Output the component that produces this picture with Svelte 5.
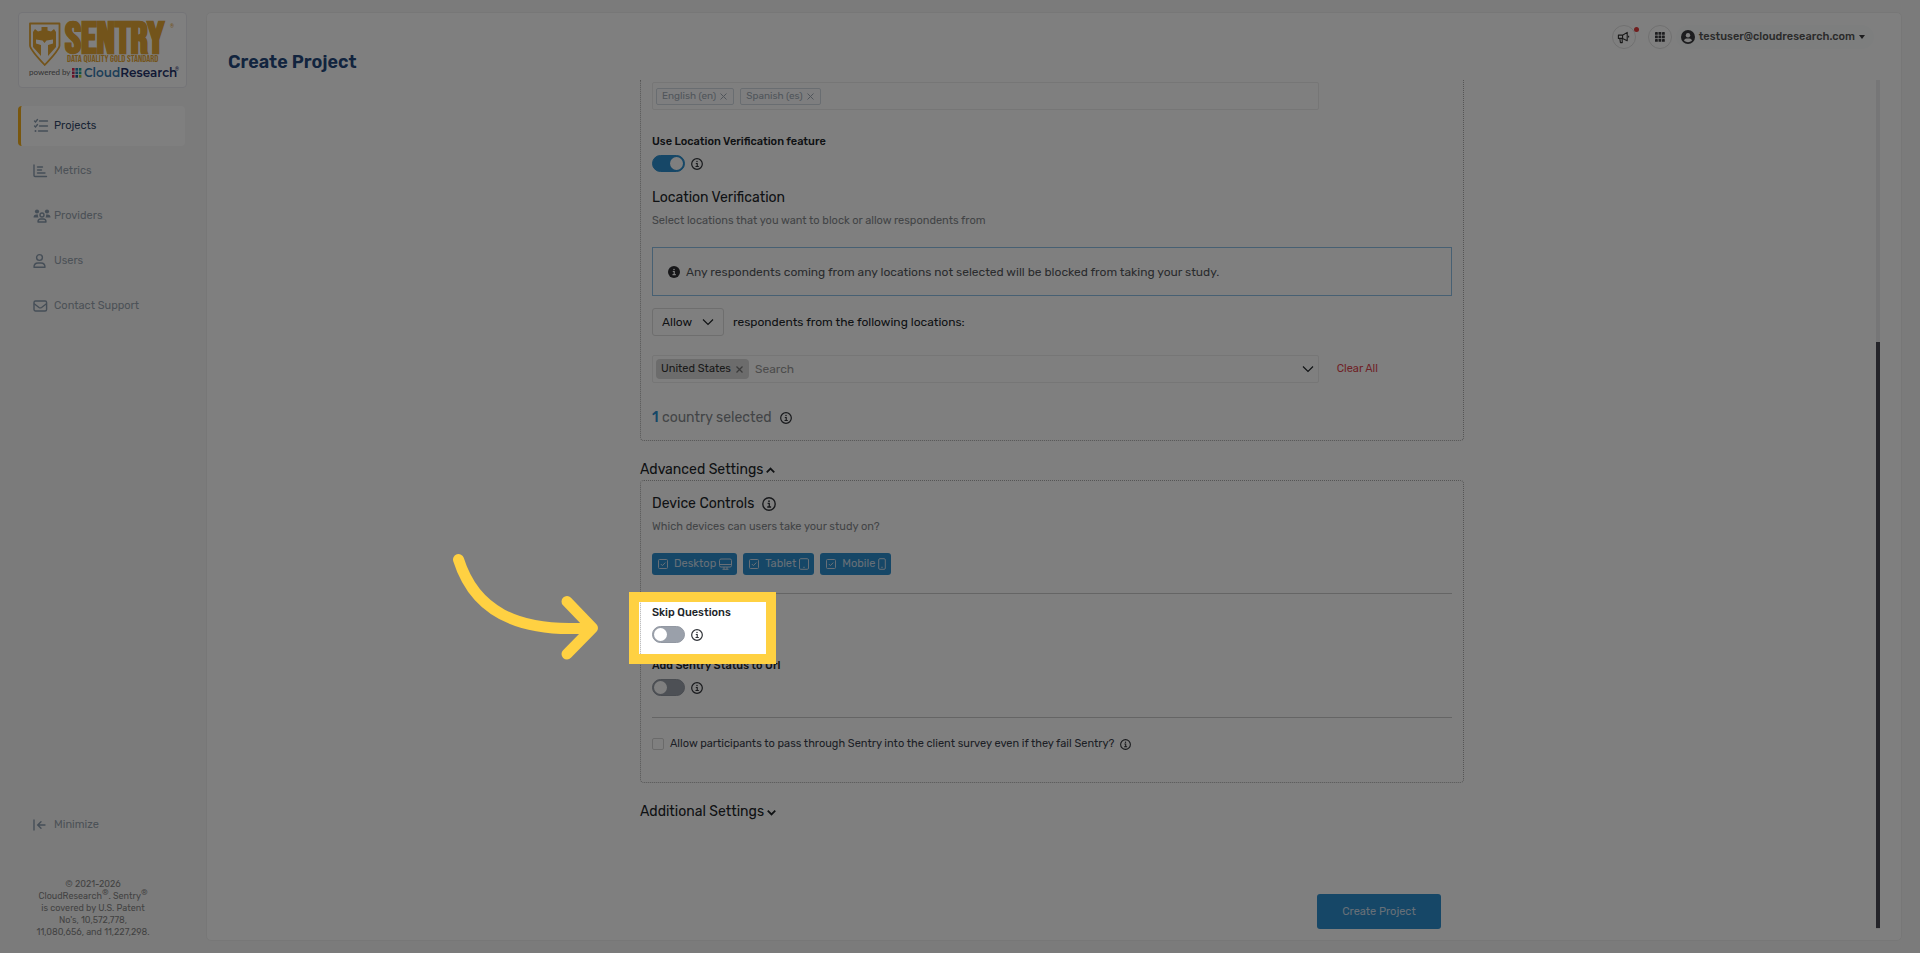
<script lang="ts">
  interface NavItem {
    label: string;
    icon: string;
    active?: boolean;
  }

  const nav: NavItem[] = [
    { label: "Projects", icon: "tasks", active: true },
    { label: "Metrics", icon: "chart" },
    { label: "Providers", icon: "group" },
    { label: "Users", icon: "user" },
    { label: "Contact Support", icon: "mail" },
  ];

  const devices = ["Desktop", "Tablet", "Mobile"];

  let languages = $state(["English (en)", "Spanish (es)"]);
  let countries = $state(["United States"]);
  let mode = $state("Allow");
  let search = $state("");
  let useLocation = $state(true);
  let skipQuestions = $state(false);
  let addStatus = $state(false);
  let passThrough = $state(false);
  let picked = $state(["Desktop", "Tablet", "Mobile"]);
</script>

{#snippet info(size: string)}
  <svg class="info {size}" viewBox="0 0 16 16" fill="none" stroke="currentColor">
    <circle cx="8" cy="8" r="7.1" stroke-width="1.6" />
    <path d="M6.4 7.3h1.9v4M6 11.4h4.4" stroke-width="1.5" />
    <circle cx="8" cy="4.8" r="1" fill="currentColor" stroke="none" />
  </svg>
{/snippet}

{#snippet chevron(cls: string)}
  <svg class="chevron {cls}" viewBox="0 0 12 12" fill="none" stroke="currentColor">
    <path d="M1 3.5l5 5 5-5" />
  </svg>
{/snippet}

{#snippet navIcon(name: string)}
  <svg class="nav-icon" viewBox="0 0 18 16" fill="none" stroke="currentColor" stroke-width="1.4" stroke-linecap="round">
    {#if name === "tasks"}
      <path d="M1.5 3l1 1 2-2.5M1.5 8l1 1 2-2.5M6.5 3h8M6.5 8h8M5.5 13h9" />
      <circle cx="2.5" cy="13" r="1" fill="currentColor" stroke="none" />
    {:else if name === "chart"}
      <path d="M1 2v10.500q0 1 1 1h11.500M4.500 4h5M4.500 7h4M4.500 10h7.500" />
    {:else if name === "group"}
      <g fill="currentColor" stroke="none">
        <circle cx="4" cy="3.5" r="2.1" />
        <circle cx="14" cy="3.5" r="2.1" />
        <path d="M.5 9.500q0-3 3-3h1.500q-.5 1.500.5 3zM17.500 9.500q0-3-3-3h-1.500q.5 1.500-.5 3z" />
      </g>
      <circle cx="9" cy="7" r="2" />
      <path d="M5 14q0-3 2.500-3h3q2.500 0 2.500 3z" stroke-linejoin="round" />
    {:else if name === "user"}
      <circle cx="6.5" cy="4.5" r="2.9" />
      <path d="M1 14.200q0-4.200 4-4.200h3q4 0 4 4.200z" stroke-linejoin="round" />
    {:else if name === "mail"}
      <rect x="1" y="3" width="12.600" height="10" rx="1.5" />
      <path d="M1.500 6l4.500 3.500q1.300.8 2.600 0l4.500-3.500" />
    {:else}
      <path d="M1 3v10M12 8H5M8 4.700L4.700 8l3.300 3.300" />
    {/if}
  </svg>
{/snippet}

<div class="app">
  <aside>
    <a class="brand" href="#home" aria-label="Sentry, powered by CloudResearch">
      <svg viewBox="0 0 167 74">
        <path
          d="M11 10.500h29.500v22q0 4-14.750 19.500q-14.750-15.500-14.750-19.500z"
          fill="none"
          stroke="#e7a836"
          stroke-width="1.8"
          stroke-linejoin="round"
        />
        <path
          fill="#e7a836"
          d="M14 19l2-3 3 2.500 3.500-1V14h6v3.500l3.500 1 3-2.500 2 3v15l-8 9V32l5-1.500v-4l-6.500 1-2 2.500-2-2.500-6.500-1v4l5 1.500v11l-8-9z"
        />
        <text class="logo-name" x="46" y="40">SENTRY</text>
        <text class="logo-tag" x="48" y="49">DATA QUALITY GOLD STANDARD</text>
        <text class="logo-reg" x="151" y="15">®</text>
        <text class="logo-by" x="10" y="62">powered by</text>
        {#each ["#e2264d", "#2b7fb8", "#19a89a", "#b02a5b", "#2b7fb8", "#19a89a", "#e2264d", "#245a92", "#a9c83a"] as fill, i}
          <rect x={53 + (i % 3) * 3.4} y={55 + Math.floor(i / 3) * 3.5} width="2.6" height="2.7" {fill} />
        {/each}
        <text class="logo-cr" x="65" y="64"><tspan fill="#3a7cb0">Cloud</tspan><tspan fill="#24336b">Research</tspan></text>
        <text class="logo-reg dark" x="156" y="58">®</text>
      </svg>
    </a>

    <nav>
      {#each nav as item}
        <a class="nav-item" class:active={item.active} href="#{item.icon}">
          {@render navIcon(item.icon)}
          {item.label}
        </a>
      {/each}
    </nav>

    <button class="nav-item minimize">
      {@render navIcon("minimize")}
      Minimize
    </button>
    <p class="legal">
      © 2021-2026<br />CloudResearch<sup>®</sup>. Sentry<sup>®</sup><br />is covered by U.S. Patent<br />No's, 10,572,778,<br />11,080,656, and 11,227,298.
    </p>
  </aside>

  <main>
    <header>
      <h1>Create Project</h1>
      <div class="actions">
        <button class="round" aria-label="Announcements">
          <svg width="13" height="13" viewBox="0 0 14 14" fill="none" stroke="#333" stroke-width="1.2" stroke-linejoin="round">
            <path d="M1.500 4.500h4.500l5-3v9l-5-2.500H1.500zM6 4.500v3.500M3 8l.7 4.500h2L5.500 8M12.500 5v2" />
          </svg>
          <span class="dot"></span>
        </button>
        <button class="round" aria-label="Apps">
          <svg width="10" height="10" viewBox="0 0 10 10" fill="#3a3a3e">
            {#each [0, 1, 2, 3, 4, 5, 6, 7, 8] as n}
              <rect x={(n % 3) * 3.5} y={Math.floor(n / 3) * 3.5} width="2.8" height="2.8" rx=".4" />
            {/each}
          </svg>
        </button>
        <button class="account">
          <svg width="14" height="14" viewBox="0 0 14 14">
            <circle cx="7" cy="7" r="7" fill="#3a3a3e" />
            <circle cx="7" cy="5.2" r="2.2" fill="#fff" />
            <path d="M3 10.800q.5-2.300 2.500-2.300h3q2 0 2.500 2.300q-4 2.800-8 0z" fill="#fff" />
          </svg>
          testuser@cloudresearch.com
          <svg width="6" height="4" viewBox="0 0 6 4"><path d="M0 0h6L3 4z" fill="#3a3a3e" /></svg>
        </button>
      </div>
    </header>

    <div class="scroller">
      <div class="column">
        <section class="card cut">
          <div class="row">
            <div class="field">
              {#each languages as lang}
                <span class="tag">
                  {lang}
                  <button aria-label="Remove {lang}" onclick={() => (languages = languages.filter((l) => l !== lang))}>
                    <svg width="7" height="7" viewBox="0 0 7 7" stroke="currentColor"><path d="M.5.5l6 6M6.500.5l-6 6" /></svg>
                  </button>
                </span>
              {/each}
            </div>
          </div>

          <div class="switch first">
            <label for="use-location">Use Location Verification feature</label>
            <div class="switch-row">
              <input id="use-location" type="checkbox" role="switch" bind:checked={useLocation} />
              {@render info("sm")}
            </div>
          </div>

          <h2 class="after-switch">Location Verification</h2>
          <p class="hint">Select locations that you want to block or allow respondents from</p>

          <div class="alert">
            <svg width="12" height="12" viewBox="0 0 16 16">
              <circle cx="8" cy="8" r="8" fill="#2f2f33" />
              <path d="M6.400 7.300h1.900v4M6 11.400h4.400" fill="none" stroke="#fff" stroke-width="1.6" />
              <circle cx="8" cy="4.7" r="1.1" fill="#fff" />
            </svg>
            Any respondents coming from any locations not selected will be blocked from taking your study.
          </div>

          <div class="mode">
            <div class="select">
              <select id="mode" bind:value={mode}>
                <option>Allow</option>
                <option>Block</option>
              </select>
              {@render chevron("thin")}
            </div>
            <label for="mode">respondents from the following locations:</label>
          </div>

          <div class="row">
            <div class="field">
              {#each countries as country}
                <span class="tag solid">
                  {country}
                  <button aria-label="Remove {country}" onclick={() => (countries = countries.filter((c) => c !== country))}>
                    <svg width="7" height="7" viewBox="0 0 7 7" stroke="currentColor" stroke-width="1.3"><path d="M.5.5l6 6M6.500.5l-6 6" /></svg>
                  </button>
                </span>
              {/each}
              <input class="search" type="text" aria-label="Search locations" placeholder="Search" bind:value={search} />
              {@render chevron("thin")}
            </div>
            <button class="clear" onclick={() => (countries = [])}>Clear All</button>
          </div>

          <p class="count"><span><b>{countries.length}</b> country selected</span>{@render info("sm")}</p>
        </section>

        <button class="section-toggle">Advanced Settings {@render chevron("up")}</button>

        <section class="card">
          <h2>Device Controls {@render info("md")}</h2>
          <p class="hint">Which devices can users take your study on?</p>

          <div class="devices">
            {#each devices as device}
              <label class="device">
                <input type="checkbox" value={device} bind:group={picked} />
                <svg width="10" height="10" viewBox="0 0 10 10" fill="none" stroke="currentColor">
                  <rect x=".5" y=".5" width="9" height="9" rx="1" />
                  <path d="M2.800 5l1.600 1.600 2.900-3" />
                </svg>
                <span>{device}</span>
                {#if device === "Desktop"}
                  <svg width="13" height="12" viewBox="0 0 13 12" fill="none" stroke="currentColor">
                    <rect x=".5" y="1" width="12" height="8" rx="1.5" />
                    <path d="M.5 6.500h12M5 9v2M8 9v2M3.500 11.300h6" />
                  </svg>
                {:else if device === "Tablet"}
                  <svg width="10" height="12" viewBox="0 0 10 12" fill="none" stroke="currentColor">
                    <rect x=".5" y=".7" width="9" height="10.6" rx="1.2" />
                    <path d="M4.300 9.300h1.400" />
                  </svg>
                {:else}
                  <svg width="8" height="12" viewBox="0 0 8 12" fill="none" stroke="currentColor">
                    <rect x=".7" y=".7" width="6.6" height="10.6" rx="1.2" />
                    <path d="M3.300 9.300h1.400" />
                  </svg>
                {/if}
              </label>
            {/each}
          </div>

          <hr />

          <div class="switch">
            <label for="skip">Skip Questions</label>
            <div class="switch-row">
              <input id="skip" type="checkbox" role="switch" bind:checked={skipQuestions} />
              {@render info("sm")}
            </div>

            <!-- tour step: dims the page and leaves this field clear -->
            <div class="spotlight"></div>
            <svg class="pointer" viewBox="440 540 180 140" fill="none" stroke="#ffd142" stroke-width="11" stroke-linecap="round" stroke-linejoin="round">
              <path d="M458.500 559.500C474 609 515 634 592 627.500M567 601.500l25.500 26.500-25.500 26" />
            </svg>
          </div>

          <div class="switch second">
            <label for="status">Add Sentry Status to Url</label>
            <div class="switch-row">
              <input id="status" type="checkbox" role="switch" bind:checked={addStatus} />
              {@render info("sm")}
            </div>
          </div>

          <hr class="late" />

          <div class="check">
            <input id="pass" type="checkbox" bind:checked={passThrough} />
            <label for="pass">Allow participants to pass through Sentry into the client survey even if they fail Sentry?</label>
            {@render info("xs")}
          </div>
        </section>

        <button class="section-toggle">Additional Settings {@render chevron("down")}</button>

        <button class="submit">Create Project</button>
      </div>

      <div class="track"><div class="thumb"></div></div>
    </div>
  </main>
</div>

<style>
  :global(body) {
    background: #f7f7f7;
  }
  .app {
    display: flex;
    min-height: 100vh;
    overflow: hidden;
    box-sizing: border-box;
    background: #f7f7f7;
    color: #212529;
    font: 11px/16px Rubik, Roboto, "Liberation Sans", sans-serif;
  }
  .app :global(*) {
    box-sizing: border-box;
  }
  button,
  input,
  select {
    font: inherit;
    color: inherit;
    margin: 0;
  }
  button {
    padding: 0;
    border: 0;
    background: none;
    cursor: pointer;
  }
  h1,
  h2,
  p {
    margin: 0;
  }
  svg {
    flex: none;
    display: block;
  }

  /* Sidebar */
  aside {
    flex: none;
    display: flex;
    flex-direction: column;
    width: 206px;
    padding: 12px 18px 15px;
  }
  .brand {
    width: 169px;
    height: 76px;
    border: 1px solid #e8e8ee;
    border-radius: 4px;
    background: #fff;
  }
  .logo-name {
    font: 700 43px "Bebas Neue", Oswald, "Liberation Sans", sans-serif;
    fill: #e7a836;
    stroke: #e7a836;
    stroke-width: 1px;
  }
  .logo-tag {
    font: 400 10px "Bebas Neue", Oswald, "Liberation Sans", sans-serif;
    fill: #e7a836;
  }
  .logo-reg {
    font: 5px Roboto, sans-serif;
    fill: #e7a836;
  }
  .logo-reg.dark {
    fill: #24336b;
  }
  .logo-by {
    font: 8px Lato, sans-serif;
    fill: #666;
  }
  .logo-cr {
    font: 600 12px Montserrat, Lato, sans-serif;
  }
  nav {
    display: flex;
    flex-direction: column;
    gap: 5px;
    margin-top: 18px;
  }
  .nav-item {
    display: flex;
    align-items: center;
    gap: 3px;
    width: 167px;
    height: 40px;
    padding-left: 12px;
    border-left: 3px solid transparent;
    border-radius: 4px;
    color: #97a3ae;
    text-decoration: none;
  }
  .nav-item.active {
    background: #fff;
    border-left-color: #f3ae1c;
    color: #33496b;
  }
  .nav-icon {
    width: 18px;
    height: 16px;
    color: #8b9cae;
  }
  .minimize {
    margin-top: auto;
  }
  .legal {
    width: 150px;
    margin-top: 33px;
    font-size: 9px;
    line-height: 12px;
    text-align: center;
    color: #868686;
  }
  .legal sup {
    font-size: 8px;
    line-height: 0;
  }

  /* Main panel */
  main {
    flex: 1;
    display: flex;
    flex-direction: column;
    margin: 12px 18px 12px 0;
    padding: 0 21px 11px;
    border: 1px solid #efefef;
    border-radius: 5px;
    background: #fff;
  }
  header {
    display: flex;
    justify-content: space-between;
    height: 67px;
    padding-right: 6px;
  }
  h1 {
    align-self: flex-end;
    padding-bottom: 6px;
    font-size: 18px;
    line-height: 24px;
    font-weight: 600;
    color: #24487d;
  }
  .actions {
    display: flex;
    align-items: flex-start;
    gap: 12px;
    padding-top: 12px;
  }
  .round {
    position: relative;
    display: grid;
    place-items: center;
    width: 24px;
    height: 24px;
    border: 1px solid #e0e0e0;
    border-radius: 50%;
  }
  .dot {
    position: absolute;
    top: 1px;
    right: -4px;
    width: 5px;
    height: 5px;
    border-radius: 50%;
    background: #e23c3c;
  }
  .account {
    display: flex;
    align-items: center;
    gap: 4px;
    height: 24px;
    margin-left: -8px;
    padding: 0 9px 0 5px;
    border-radius: 12px;
    background: #fbfdfd;
    font-weight: 500;
    color: #555;
  }
  .scroller {
    flex: 1;
    display: flex;
  }
  .column {
    display: flex;
    flex-direction: column;
    align-items: flex-start;
    width: calc(50% - 2px);
    margin: 0 auto;
  }
  .track {
    width: 4px;
    background: #ececee;
  }
  .thumb {
    height: 69%;
    margin-top: 262px;
    background: #484852;
  }

  /* Cards */
  .card {
    width: 100%;
    padding: 13px 11px 30px;
    border: 1px dotted #aaa;
    border-radius: 4px;
  }
  .card.cut {
    padding-top: 2px;
    padding-bottom: 12px;
    border-top: 0;
    border-radius: 0 0 4px 4px;
  }
  h2 {
    display: flex;
    align-items: center;
    gap: 8px;
    font-size: 14px;
    line-height: 20px;
    font-weight: 400;
  }
  .after-switch {
    margin-top: 16px;
  }
  .hint {
    margin-top: 5px;
    color: #85898d;
  }
  .row {
    display: grid;
    grid-template-columns: 5fr 1fr;
    align-items: center;
  }
  .field {
    display: flex;
    align-items: center;
    gap: 6px;
    height: 28px;
    padding: 0 4px 0 3px;
    border: 1px solid #ececec;
    border-radius: 2px;
  }
  .tag {
    display: flex;
    align-items: center;
    gap: 4px;
    height: 17px;
    padding: 0 6px 0 5px;
    border: 1px solid #d3dbe3;
    border-radius: 2px;
    background: #fdfdfe;
    font-size: 10px;
    color: #a0abb6;
  }
  .tag.solid {
    gap: 5px;
    height: 20px;
    border: 0;
    border-radius: 4px;
    background: #d9d9d9;
    font-size: 11px;
    color: #333;
  }
  .solid button {
    color: #777;
  }
  .search {
    flex: 1;
    min-width: 0;
    padding: 0;
    border: 0;
    outline: 0;
    background: none;
    font-size: 12px;
  }
  .search::placeholder {
    color: #999;
    opacity: 1;
  }
  .clear {
    justify-self: start;
    padding-left: 18px;
    color: #e0444e;
  }
  .alert {
    display: flex;
    align-items: center;
    gap: 6px;
    min-height: 49px;
    margin-top: 18px;
    padding: 0 15px;
    border: 1px solid #8fc0e6;
    font-size: 12px;
    color: #55585c;
  }
  .mode {
    display: flex;
    align-items: center;
    gap: 9px;
    margin: 12px 0 19px;
    font-size: 12px;
  }
  .select {
    display: flex;
    align-items: center;
  }
  select {
    width: 72px;
    height: 28px;
    padding: 0 9px;
    border: 1px solid #dcdcdc;
    border-radius: 3px;
    background: #fff;
    appearance: none;
  }
  .select :global(.chevron) {
    margin-left: -22px;
    margin-right: 10px;
    pointer-events: none;
  }
  .count {
    display: flex;
    align-items: center;
    gap: 8px;
    margin-top: 25px;
    font-size: 14px;
    line-height: 20px;
    color: #85898d;
  }
  .count b {
    font-weight: 500;
    color: #2c8fce;
  }

  /* Icons */
  .info {
    width: 12px;
    height: 12px;
    color: #303338;
  }
  .info.md {
    width: 14px;
    height: 14px;
  }
  .info.xs {
    width: 11px;
    height: 11px;
  }
  .chevron {
    width: 12px;
    height: 12px;
    stroke-width: 1.2;
  }
  .chevron.up,
  .chevron.down {
    width: 9px;
    height: 9px;
    stroke-width: 2.4;
  }
  .chevron.up {
    transform: scaleY(-1);
  }

  .section-toggle {
    display: flex;
    align-items: center;
    gap: 3px;
    margin-top: 19px;
    font-size: 14px;
    line-height: 20px;
  }

  /* Switches */
  .switch {
    position: relative;
  }
  .switch.first {
    margin-top: 24px;
  }
  .switch.second {
    margin-top: 15px;
  }
  .switch label {
    display: block;
    font-weight: 500;
  }
  .switch-row {
    display: flex;
    align-items: center;
    gap: 6px;
    margin-top: 5px;
  }
  .switch input {
    width: 33px;
    height: 17px;
    padding: 1px;
    border: 1px solid #9298a2;
    border-radius: 9px;
    background: #9aa0aa;
    appearance: none;
  }
  .switch input::before {
    content: "";
    display: block;
    width: 13px;
    height: 13px;
    border-radius: 50%;
    background: #fff;
  }
  .switch input:checked {
    border-color: #2c8fce;
    background: #2c8fce;
  }
  .switch input:checked::before {
    margin-left: auto;
  }

  .spotlight {
    position: absolute;
    z-index: 10;
    top: -13px;
    left: -23px;
    width: 147px;
    height: 72px;
    border: 10px solid #ffd142;
    box-shadow: 0 0 0 3000px rgba(0, 0, 0, 0.5);
    pointer-events: none;
  }
  .pointer {
    position: absolute;
    z-index: 11;
    top: -65px;
    left: -212px;
    width: 180px;
    height: 140px;
    pointer-events: none;
  }

  .devices {
    display: flex;
    gap: 6px;
    margin-top: 18px;
  }
  .device {
    display: flex;
    align-items: center;
    gap: 3px;
    height: 22px;
    padding: 0 5px 0 6px;
    border-radius: 3px;
    background: #2c8fce;
    color: #cfdfee;
  }
  .device span {
    margin-left: 3px;
  }
  .device input {
    position: absolute;
    opacity: 0;
    pointer-events: none;
  }
  hr {
    width: 100%;
    height: 1px;
    margin: 18px 0 11px;
    border: 0;
    background: #cacaca;
  }
  hr.late {
    margin: 21px 0 18px;
  }
  .check {
    display: flex;
    align-items: center;
    gap: 6px;
    color: #3a3f4c;
  }
  .check input {
    width: 12px;
    height: 12px;
    border: 1px solid #d5d5d5;
    border-radius: 2px;
    appearance: none;
  }
  .submit {
    align-self: flex-end;
    width: 124px;
    height: 35px;
    margin-top: auto;
    margin-right: 23px;
    border-radius: 3px;
    background: #2c8fce;
    color: #cfdfee;
  }
</style>
